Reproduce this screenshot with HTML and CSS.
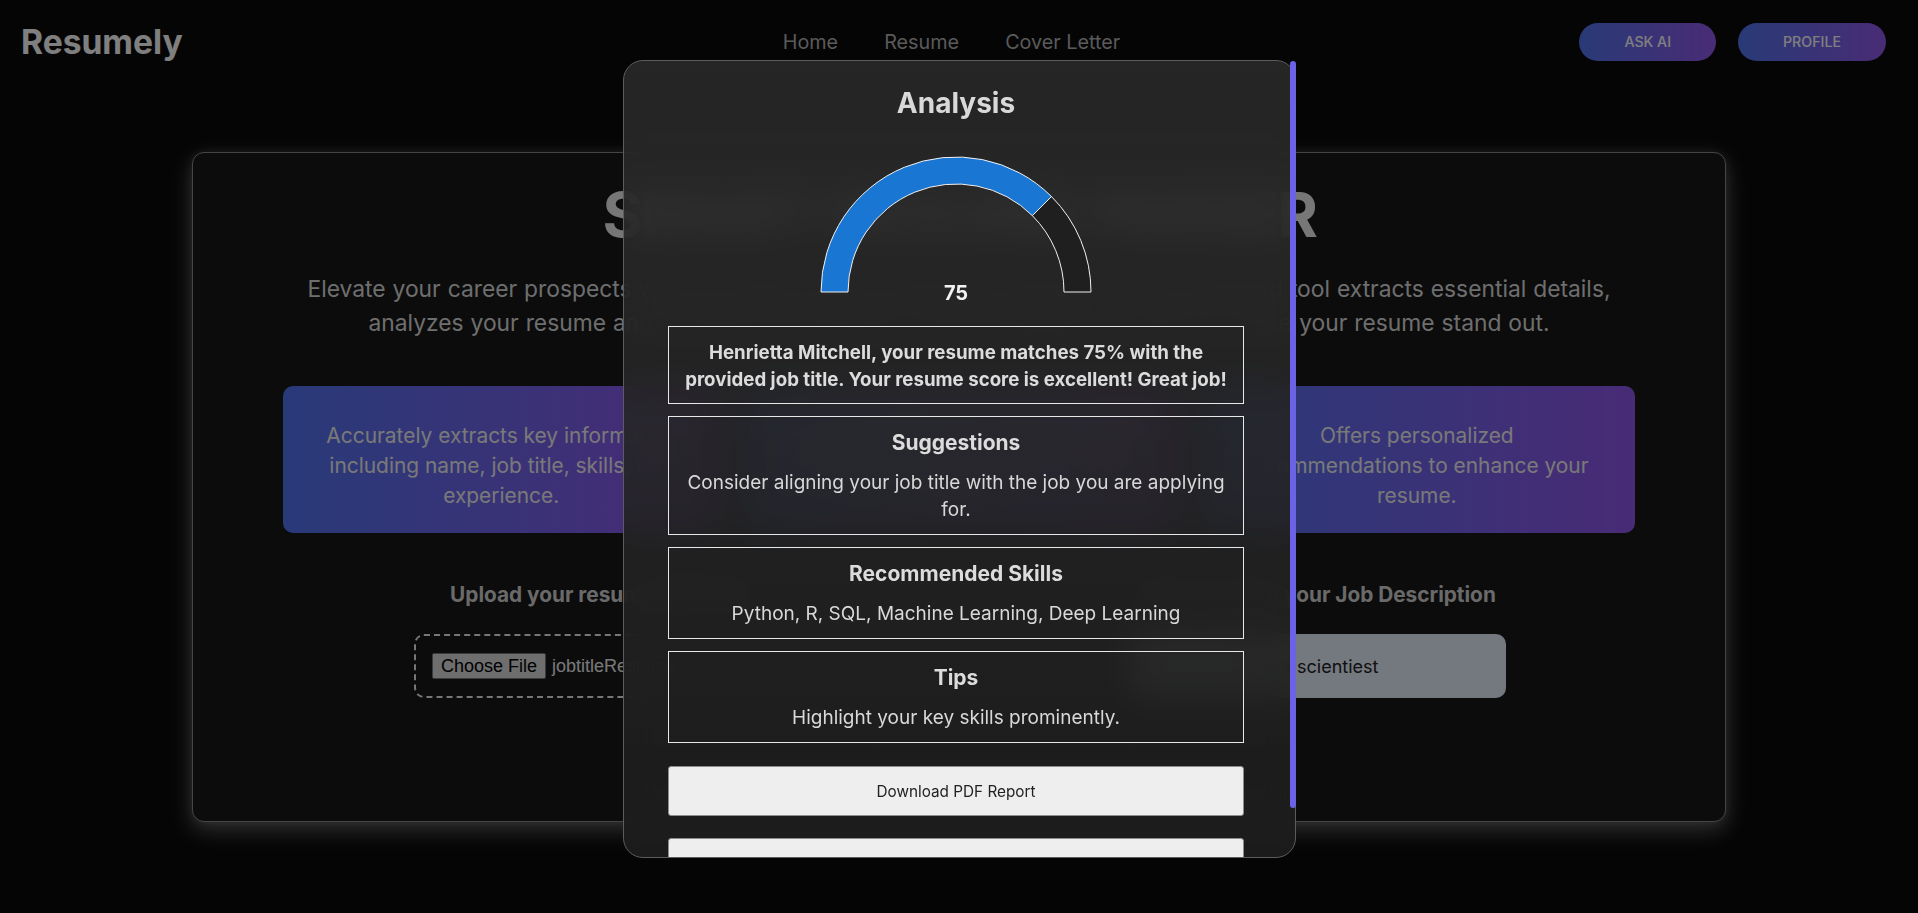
FILE: index.html
```html
<!DOCTYPE html>
<html lang="en">
<head>
<meta charset="utf-8">
<title>Resumely</title>
<link rel="stylesheet" href="styles.css">
</head>
<body>
<header class="topbar">
  <div class="logo">Resumely</div>
  <nav class="nav">
    <a href="#">Home</a>
    <a href="#">Resume</a>
    <a href="#">Cover Letter</a>
  </nav>
  <div class="actions">
    <button class="pill">ASK AI</button>
    <button class="pill">PROFILE</button>
  </div>
</header>

<main class="analyzer">
  <h1 class="hero-title">SMART RESUME PARSER</h1>
  <p class="hero-text">Elevate your career prospects with our state-of-the-art Resume Analyzer. Our AI-powered tool extracts essential details, analyzes your resume and provides personalized recommendations to help you make your resume stand out.</p>

  <div class="features">
    <div class="feature"><p>Accurately extracts key information including name, job title, skills, and experience.</p></div>
    <div class="feature"><p>Compares your resume with the job description and calculates a match score.</p></div>
    <div class="feature"><p>Offers personalized recommendations to enhance your resume.</p></div>
  </div>

  <div class="inputs">
    <div class="field">
      <h3 class="field-title">Upload your resume (PDF file)</h3>
      <div class="dropzone">
        <span class="file-btn">Choose File</span>
        <span class="file-name">jobtitleResume.pdf</span>
      </div>
    </div>
    <div class="field">
      <h3 class="field-title">Enter or paste your Job Description</h3>
      <input class="job-input" type="text" value="data scientiest">
    </div>
  </div>
</main>

<div class="backdrop"></div>

<section class="modal">
  <div class="modal-body">
    <h2 class="modal-title">Analysis</h2>
    <svg class="gauge" width="300" height="160" viewBox="0 0 300 160">
      <path d="M15 142 A135 135 0 0 1 245.46 46.54 L226.37 65.63 A108 108 0 0 0 42 142 Z" fill="#1976d2" stroke="#f2f2f2" stroke-width="1"/>
      <path d="M245.46 46.54 A135 135 0 0 1 285 142 L258 142 A108 108 0 0 0 226.37 65.63 Z" fill="#1f1f1f" stroke="#f2f2f2" stroke-width="1"/>
      <text x="150" y="150" text-anchor="middle" class="gauge-value">75</text>
    </svg>

    <div class="result summary">Henrietta Mitchell, your resume matches 75% with the provided job title. Your resume score is excellent! Great job!</div>

    <div class="result">
      <h4 class="result-title">Suggestions</h4>
      <p class="result-text">Consider aligning your job title with the job you are applying for.</p>
    </div>

    <div class="result">
      <h4 class="result-title">Recommended Skills</h4>
      <p class="result-text">Python, R, SQL, Machine Learning, Deep Learning</p>
    </div>

    <div class="result">
      <h4 class="result-title">Tips</h4>
      <p class="result-text">Highlight your key skills prominently.</p>
    </div>

    <button class="action first">Download PDF Report</button>
    <button class="action">Close</button>
  </div>
  <div class="scroll-thumb"></div>
</section>
</body>
</html>
```
FILE: styles.css
```css
html, body {
  margin: 0;
  padding: 0;
}

body {
  background: #0a0a0a;
  font-family: Inter, "Noto Sans", sans-serif;
  height: 913px;
  overflow: hidden;
}

/* ---------- header ---------- */
.topbar {
  display: grid;
  grid-template-columns: 1fr auto 1fr;
  align-items: center;
  height: 83px;
  padding: 0 32px 0 21px;
}

.logo {
  font-weight: 700;
  font-size: 33.6px;
  line-height: 40px;
  color: #ffffff;
}

.nav {
  display: flex;
  gap: 46px;
  margin-right: 4px;
}

.nav a {
  font-size: 19.8px;
  color: #b4b4b4;
  text-decoration: none;
}

.actions {
  display: flex;
  justify-content: flex-end;
  gap: 22px;
}

.pill {
  height: 38px;
  padding: 0 45px;
  border: 0;
  border-radius: 19px;
  background: linear-gradient(90deg, #5274ee, #9258ec);
  color: #ffffff;
  font-family: Inter, sans-serif;
  font-weight: 500;
  font-size: 14.2px;
}

/* ---------- main card ---------- */
.analyzer {
  width: 80%;
  height: 670px;
  margin: 69px auto 0;
  box-sizing: border-box;
  border: 1px solid #8a8a8a;
  border-radius: 12px;
  background: #181818;
  box-shadow: 0 8px 22px rgba(255, 255, 255, 0.35), 0 0 10px rgba(255, 255, 255, 0.12);
  padding: 24px 90px 0;
  text-align: center;
}

.hero-title {
  margin: 0;
  font-size: 62px;
  line-height: 75px;
  font-weight: 700;
  letter-spacing: -2.3px;
  color: #eeeeee;
}

.hero-text {
  margin: 20px 0 0;
  font-size: 22.8px;
  line-height: 34px;
  word-spacing: 0.6px;
  color: #dddddd;
}

.features {
  margin-top: 46px;
  display: grid;
  grid-template-columns: repeat(3, 1fr);
  gap: 21px;
}

.feature {
  height: 147px;
  box-sizing: border-box;
  padding: 35px 36px 0;
  border-radius: 10px;
  background: linear-gradient(90deg, #5274f2, #9256ec);
}

.feature p {
  margin: 0;
  font-size: 20.9px;
  line-height: 30px;
  color: #f2f2f2;
}

.inputs {
  margin-top: 49px;
  display: grid;
  grid-template-columns: 1fr 1fr;
  gap: 78px;
}

.field-title {
  margin: 0;
  font-size: 20.8px;
  line-height: 25px;
  font-weight: 700;
  color: #d4d4d4;
}

.dropzone {
  width: 375px;
  height: 64px;
  margin: 27px auto 0;
  box-sizing: border-box;
  border: 2px dashed #eeeeee;
  border-radius: 10px;
  display: flex;
  align-items: center;
  padding: 0 16px;
  font-family: "Liberation Sans", Arial, sans-serif;
  font-size: 18px;
}

.file-btn {
  height: 26px;
  box-sizing: border-box;
  padding: 0 8px;
  line-height: 24px;
  background: #dcdcdc;
  border: 1px solid #767676;
  border-radius: 2px;
  color: #000000;
}

.file-name {
  margin-left: 6px;
  color: #f2f2f2;
  white-space: nowrap;
}

.job-input {
  display: block;
  width: 378px;
  height: 64px;
  margin: 27px auto 0;
  box-sizing: border-box;
  border: 0;
  border-radius: 10px;
  background: #e8f0fe;
  text-align: center;
  font-family: Inter, sans-serif;
  font-size: 18px;
  color: #222222;
}

/* ---------- modal ---------- */
.backdrop {
  position: fixed;
  inset: 0;
  background: rgba(0, 0, 0, 0.5);
}

.modal {
  position: fixed;
  top: 60px;
  left: calc(50% - 336px);
  width: 673px;
  height: 798px;
  box-sizing: border-box;
  border: 1px solid #5c5c5c;
  border-radius: 20px;
  background: linear-gradient(180deg, rgba(44, 44, 44, 0.86), rgba(29, 29, 29, 0.93));
  backdrop-filter: blur(18px);
  color: #dadada;
}

.modal-body {
  height: 100%;
  box-sizing: border-box;
  overflow-y: auto;
  scrollbar-width: none;
  border-radius: 19px;
  padding: 25px 51px 20px 44px;
  text-align: center;
}

.scroll-thumb {
  position: absolute;
  top: 0;
  right: -1px;
  width: 6px;
  height: 747px;
  border-radius: 3px;
  background: #6b63e6;
}

.modal-title {
  margin: 0;
  font-size: 28px;
  font-weight: 700;
  color: #d9d9d9;
}

.gauge {
  display: block;
  margin: 30px auto 0;
}

.gauge-value {
  font-family: Inter, sans-serif;
  font-weight: 700;
  font-size: 20px;
  fill: #f2f2f2;
}

.result {
  margin-top: 12px;
  border: 1px solid #e8e8e8;
  padding: 12px 12px 11px;
}

.summary {
  margin-top: 16px;
  padding-bottom: 10px;
  font-weight: 700;
  font-size: 18.7px;
  line-height: 27px;
  color: #dcdcdc;
}

.result-title {
  margin: 0 0 13px;
  font-size: 21px;
  line-height: 27px;
  font-weight: 700;
  color: #dcdcdc;
}

.result-text {
  margin: 0;
  font-size: 19px;
  line-height: 27px;
  color: #d8d8d8;
}

.action {
  display: block;
  width: 100%;
  height: 50px;
  margin-top: 22px;
  background: #eeeeee;
  border: 1px solid #8c8c8c;
  border-radius: 3px;
  font-family: Inter, sans-serif;
  font-size: 15.3px;
  color: #222222;
}

.action.first {
  margin-top: 23px;
}
```
